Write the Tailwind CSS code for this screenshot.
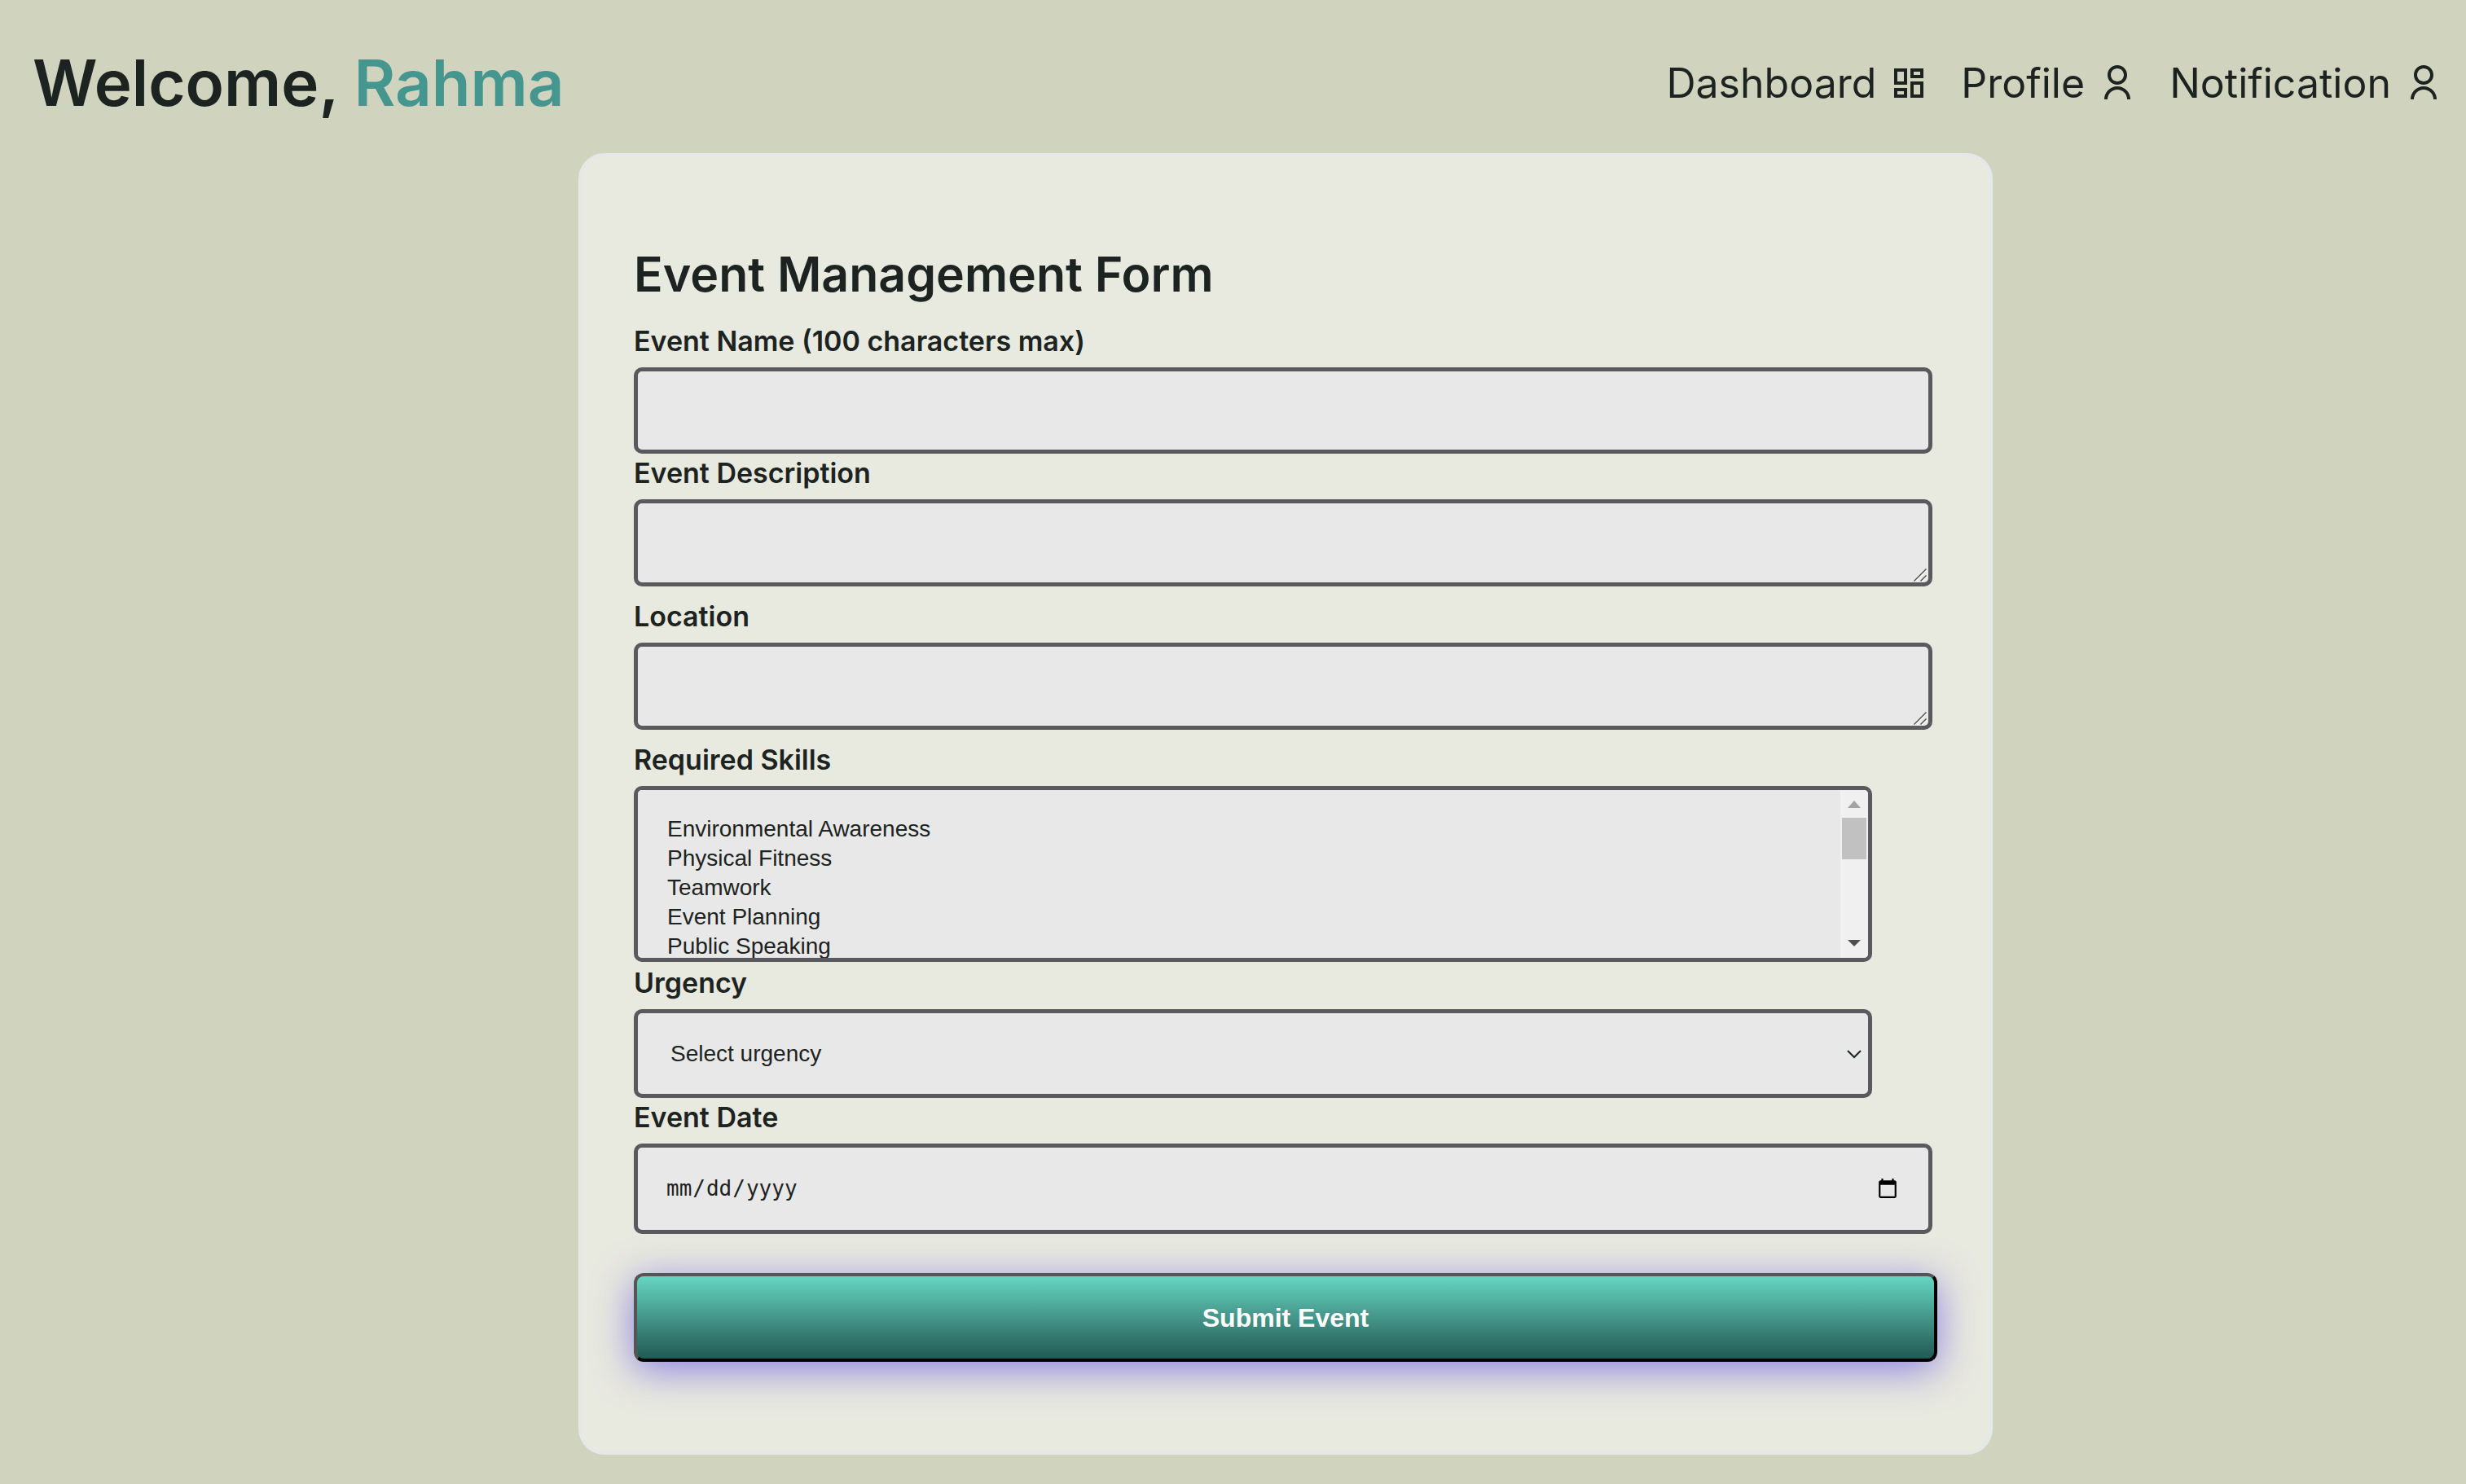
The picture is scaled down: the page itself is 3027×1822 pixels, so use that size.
<!DOCTYPE html>
<html lang="en">
<head>
<meta charset="utf-8">
<meta name="viewport" content="width=device-width, initial-scale=1">
<title>Event Management</title>
<script src="https://cdn.jsdelivr.net/npm/@tailwindcss/browser@4"></script>
</head>
<body class="min-h-screen bg-[#d0d3bd] font-['Inter',sans-serif] text-[#1c2321]">

<svg class="hidden" aria-hidden="true">
  <symbol id="user" viewBox="0 0 24 24">
    <path fill="currentColor" d="M4 22a8 8 0 1 1 16 0h-2a6 6 0 1 0-12 0H4zm8-9c-3.315 0-6-2.685-6-6s2.685-6 6-6 6 2.685 6 6-2.685 6-6 6zm0-2c2.21 0 4-1.79 4-4s-1.79-4-4-4-4 1.79-4 4 1.79 4 4 4z"/>
  </symbol>
  <symbol id="dashboard" viewBox="0 0 24 24">
    <path fill="none" stroke="currentColor" stroke-width="2" d="M4 4h6v8H4zM4 16h6v4H4zM14 4h6v4h-6zM14 12h6v8h-6z"/>
  </symbol>
  <symbol id="grip" viewBox="0 0 16 16">
    <path fill="none" stroke="#fff" stroke-width="1.2" d="M2 16 16 2M10 16 16 10"/>
    <path fill="none" stroke="#4b4b4d" stroke-width="1.4" d="M0.5 15.5 15.5 0.5M8.500 15.500 15.500 8.500"/>
  </symbol>
</svg>

<header class="flex items-center justify-between pt-[54px] pr-7 pb-[38px] pl-10">
  <h1 class="text-[78px] leading-[96px] font-semibold">Welcome, <span class="text-[#45968f]">Rahma</span></h1>
  <nav class="flex items-center gap-10 text-[50px] leading-[72px] font-normal">
    <a href="#" class="flex items-center gap-4">Dashboard<svg class="size-12"><use href="#dashboard"/></svg></a>
    <a href="#" class="flex items-center gap-4">Profile<svg class="size-12"><use href="#user"/></svg></a>
    <a href="#" class="flex items-center gap-4">Notification<svg class="size-12"><use href="#user"/></svg></a>
  </nav>
</header>

<main class="grid grid-cols-[710fr_1736fr_581fr]">
  <form class="col-start-2 rounded-[32px] border-4 border-[#e6e8e8] bg-[#e8e9df] px-16 pt-[103px] pb-[110px]">
    <h2 class="mb-4 text-[59px] leading-[84px] font-semibold">Event Management Form</h2>

    <label for="name" class="mb-2 block text-[34px] leading-[48px] font-semibold">Event Name (100 characters max)</label>
    <input id="name" type="text" maxlength="100" class="block h-[106px] w-[calc(100%-6px)] rounded-[10px] border-5 border-[#5a595e] bg-[#e8e8e8] px-8 font-['Liberation_Sans',sans-serif] text-[28px]">

    <label for="description" class="mb-2 block text-[34px] leading-[48px] font-semibold">Event Description</label>
    <div class="relative mb-[13px] w-[calc(100%-6px)]">
      <textarea id="description" rows="1" class="block h-[107px] w-full resize-none overflow-hidden rounded-[10px] border-5 border-[#5a595e] bg-[#e8e8e8] p-8 font-['Liberation_Sans',sans-serif] text-[28px] leading-8"></textarea>
      <svg class="pointer-events-none absolute right-[7px] bottom-[6px] size-4"><use href="#grip"/></svg>
    </div>

    <label for="location" class="mb-2 block text-[34px] leading-[48px] font-semibold">Location</label>
    <div class="relative mb-[13px] w-[calc(100%-6px)]">
      <textarea id="location" rows="1" class="block h-[107px] w-full resize-none overflow-hidden rounded-[10px] border-5 border-[#5a595e] bg-[#e8e8e8] p-8 font-['Liberation_Sans',sans-serif] text-[28px] leading-8"></textarea>
      <svg class="pointer-events-none absolute right-[7px] bottom-[6px] size-4"><use href="#grip"/></svg>
    </div>

    <label for="skills" class="mb-2 block text-[34px] leading-[48px] font-semibold">Required Skills</label>
    <div class="relative mb-0.5 w-[95%]">
      <select id="skills" multiple size="4" class="block h-[216px] w-full rounded-[10px] border-5 border-[#5a595e] bg-[#e8e8e8] px-9 py-8 font-['Liberation_Sans',sans-serif] text-[28px]">
        <option class="pb-1">Environmental Awareness</option>
        <option class="pb-1">Physical Fitness</option>
        <option class="pb-1">Teamwork</option>
        <option class="pb-1">Event Planning</option>
        <option class="pb-1">Public Speaking</option>
      </select>
      <!-- Scrollbar -->
      <div class="pointer-events-none absolute inset-y-[5px] right-[5px] flex w-[34px] flex-col items-center justify-between rounded-r-[5px] bg-[#f0f0f0]" aria-hidden="true">
        <div class="flex w-full flex-col items-center">
          <svg class="size-[34px]" viewBox="0 0 34 34"><path fill="#a3a3a3" d="M17 13 25 22H9z"/></svg>
          <div class="h-[51px] w-[30px] bg-[#c1c1c1]"></div>
        </div>
        <svg class="size-[34px]" viewBox="0 0 34 34"><path fill="#505050" d="M17 20 25 12H9z"/></svg>
      </div>
    </div>

    <label for="urgency" class="mb-2 block text-[34px] leading-[48px] font-semibold">Urgency</label>
    <div class="relative w-[95%]">
      <select id="urgency" class="block h-[109px] w-full appearance-none rounded-[10px] border-5 border-[#5a595e] bg-[#e8e8e8] px-10 font-['Liberation_Sans',sans-serif] text-[28px]">
        <option>Select urgency</option>
        <option>Low</option>
        <option>Medium</option>
        <option>High</option>
      </select>
      <svg class="pointer-events-none absolute inset-y-0 right-[13px] my-auto size-[18px]" viewBox="0 0 18 18" aria-hidden="true"><path fill="none" stroke="#1c2321" stroke-width="2" d="M1 5l8 8 8-8"/></svg>
    </div>

    <label for="date" class="mb-2 block text-[34px] leading-[48px] font-semibold">Event Date</label>
    <input id="date" type="date" class="block h-[111px] w-[calc(100%-6px)] rounded-[10px] border-5 border-[#5a595e] bg-[#e8e8e8] px-[34px] text-[28px] [&::-webkit-datetime-edit]:font-['DejaVu_Sans_Mono',monospace] [&::-webkit-datetime-edit]:text-[26px]">

    <button type="submit" class="mt-12 h-[109px] w-full rounded-[12px] border-4 border-t-[#555] border-r-black border-b-black border-l-[#555] bg-linear-to-b from-[#65d7c2] via-[#45968a] to-[#215a54] font-['Liberation_Sans',sans-serif] text-[32px] font-bold text-white shadow-[0_10px_48px_rgba(80,60,225,0.6)]">Submit Event</button>
  </form>
</main>
</body>
</html>
